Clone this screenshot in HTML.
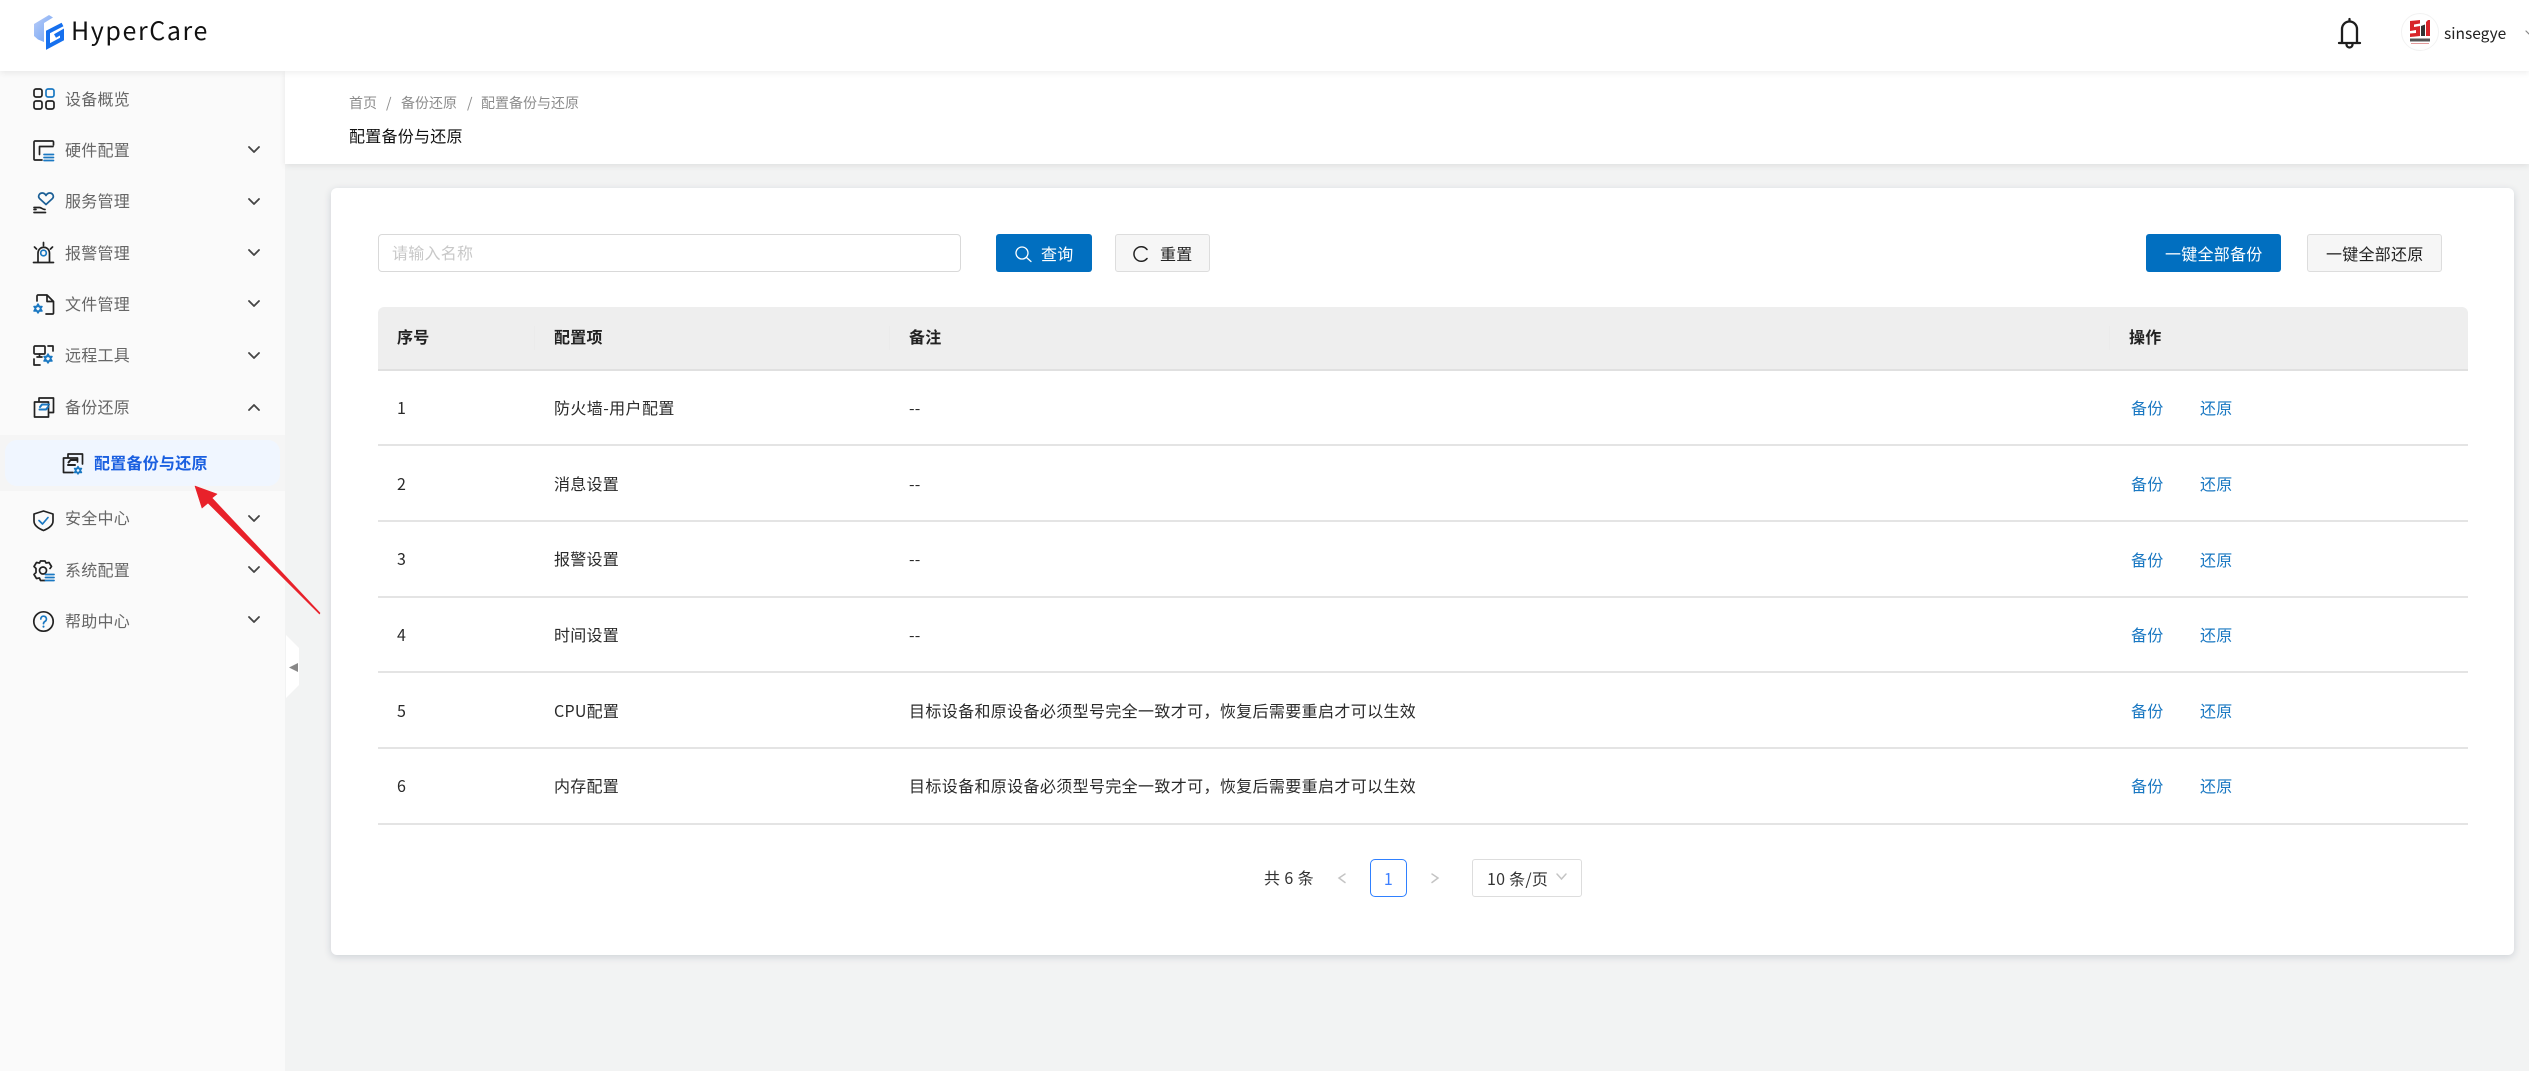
<!DOCTYPE html>
<html lang="zh"><head><meta charset="utf-8"><title>HyperCare</title>
<style>
*{box-sizing:border-box;margin:0;padding:0}
html,body{width:2529px;height:1071px;overflow:hidden;background:#f2f3f3}
body{position:relative;font-family:"Liberation Sans","Noto Sans CJK SC",sans-serif;font-size:16px;color:#333}
.a{position:absolute}
.t{position:absolute;white-space:nowrap;line-height:24px;height:24px;letter-spacing:.25px;font-family:"Noto Sans CJK SC","Liberation Sans",sans-serif}
.n{letter-spacing:0}
.m{color:#666;left:65px;margin-top:-2px}
.b{font-weight:700;color:#222;margin-top:-2px}
.l{color:#1a78c2;margin-top:-2px}
.c{color:#2a2a2a;margin-top:-2px}
.r{position:absolute;left:378px;width:2090px;height:2px;background:#e4e4e4}
</style></head><body>
<div class="a" style="left:0;top:71px;width:285px;height:1000px;background:#fafafa"></div>
<div class="a" style="left:285px;top:71px;width:2244px;height:93px;background:#fff;box-shadow:0 2px 6px rgba(0,0,0,.08)"></div>
<div class="a" style="left:0;top:0;width:2529px;height:71px;background:#fff;box-shadow:0 2px 6px rgba(0,0,0,.07)"></div>
<div class="a" style="left:0;top:435px;width:285px;height:56px;background:#f5f5f5"></div>
<div class="a" style="left:5px;top:440px;width:275px;height:46px;background:#f0f6ff;border-radius:12px"></div>
<div class="a" style="left:331px;top:188px;width:2183px;height:767px;background:#fff;border-radius:6px;box-shadow:0 2px 8px rgba(20,40,70,.16)"></div>

<div class="t" style="left:71px;top:12px;height:36px;line-height:36px;font-size:25px;letter-spacing:1.6px;color:#111">HyperCare</div>
<div class="t n" style="left:2444px;top:21px;color:#222;font-size:15.5px">sinsegye</div>

<div class="t m" style="top:88px">设备概览</div>
<div class="t m" style="top:139px">硬件配置</div>
<div class="t m" style="top:190px">服务管理</div>
<div class="t m" style="top:242px">报警管理</div>
<div class="t m" style="top:293px">文件管理</div>
<div class="t m" style="top:344px">远程工具</div>
<div class="t m" style="top:396px">备份还原</div>
<div class="t" style="left:94px;top:450px;font-weight:700;color:#1a5fe0">配置备份与还原</div>
<div class="t m" style="top:507px">安全中心</div>
<div class="t m" style="top:559px">系统配置</div>
<div class="t m" style="top:610px">帮助中心</div>

<div class="t n" style="left:349px;top:91px;font-size:14px;color:#8c8c8c">首页</div>
<div class="t n" style="left:386px;top:91px;font-size:14px;color:#8c8c8c">/</div>
<div class="t n" style="left:401px;top:91px;font-size:14px;color:#8c8c8c">备份还原</div>
<div class="t n" style="left:467px;top:91px;font-size:14px;color:#8c8c8c">/</div>
<div class="t n" style="left:481px;top:91px;font-size:14px;color:#8c8c8c">配置备份与还原</div>
<div class="t" style="left:349px;top:123px;color:#111">配置备份与还原</div>

<div class="a" style="left:378px;top:234px;width:583px;height:38px;border:1px solid #d9d9d9;border-radius:4px;background:#fff"></div>
<div class="t" style="left:392px;top:240px;color:#c8c8c8">请输入名称</div>
<div class="a" style="left:996px;top:234px;width:96px;height:38px;background:#016fc0;border-radius:3px"></div>
<div class="t" style="left:1041px;top:241px;color:#fff">查询</div>
<div class="a" style="left:1115px;top:234px;width:95px;height:38px;background:#f6f6f6;border:1px solid #ddd;border-radius:3px"></div>
<div class="t" style="left:1160px;top:241px;color:#222">重置</div>
<div class="a" style="left:2146px;top:234px;width:135px;height:38px;background:#016fc0;border-radius:3px"></div>
<div class="t" style="left:2165px;top:241px;color:#fff">一键全部备份</div>
<div class="a" style="left:2307px;top:234px;width:135px;height:38px;background:#f6f6f6;border:1px solid #ddd;border-radius:3px"></div>
<div class="t" style="left:2326px;top:241px;color:#222">一键全部还原</div>

<div class="a" style="left:378px;top:307px;width:2090px;height:64px;background:#eee;border-radius:6px 6px 0 0;border-bottom:2px solid #e0e0e0"></div>
<div class="a" style="left:534px;top:326px;width:1px;height:24px;background:#ebebeb"></div>
<div class="a" style="left:889px;top:326px;width:1px;height:24px;background:#ebebeb"></div>
<div class="a" style="left:2109px;top:326px;width:1px;height:24px;background:#ebebeb"></div>
<div class="t b" style="left:397px;top:326px">序号</div>
<div class="t b" style="left:554px;top:326px">配置项</div>
<div class="t b" style="left:909px;top:326px">备注</div>
<div class="t b" style="left:2129px;top:326px">操作</div>

<div class="r" style="top:444px"></div><div class="r" style="top:520px"></div><div class="r" style="top:596px"></div><div class="r" style="top:671px"></div><div class="r" style="top:747px"></div><div class="r" style="top:823px"></div>

<div class="t c" style="left:397px;top:397px">1</div><div class="t c" style="left:554px;top:397px;letter-spacing:.4px">防火墙-用户配置</div><div class="t c" style="left:909px;top:397px">--</div><div class="t l" style="left:2131px;top:397px">备份</div><div class="t l" style="left:2200px;top:397px">还原</div>
<div class="t c" style="left:397px;top:473px">2</div><div class="t c" style="left:554px;top:473px">消息设置</div><div class="t c" style="left:909px;top:473px">--</div><div class="t l" style="left:2131px;top:473px">备份</div><div class="t l" style="left:2200px;top:473px">还原</div>
<div class="t c" style="left:397px;top:548px">3</div><div class="t c" style="left:554px;top:548px">报警设置</div><div class="t c" style="left:909px;top:548px">--</div><div class="t l" style="left:2131px;top:549px">备份</div><div class="t l" style="left:2200px;top:549px">还原</div>
<div class="t c" style="left:397px;top:624px">4</div><div class="t c" style="left:554px;top:624px">时间设置</div><div class="t c" style="left:909px;top:624px">--</div><div class="t l" style="left:2131px;top:624px">备份</div><div class="t l" style="left:2200px;top:624px">还原</div>
<div class="t c" style="left:397px;top:700px">5</div><div class="t c" style="left:554px;top:700px">CPU配置</div><div class="t c" style="left:909px;top:700px;letter-spacing:.36px">目标设备和原设备必须型号完全一致才可，恢复后需要重启才可以生效</div><div class="t l" style="left:2131px;top:700px">备份</div><div class="t l" style="left:2200px;top:700px">还原</div>
<div class="t c" style="left:397px;top:775px">6</div><div class="t c" style="left:554px;top:775px">内存配置</div><div class="t c" style="left:909px;top:775px;letter-spacing:.36px">目标设备和原设备必须型号完全一致才可，恢复后需要重启才可以生效</div><div class="t l" style="left:2131px;top:775px">备份</div><div class="t l" style="left:2200px;top:775px">还原</div>

<div class="t" style="left:1264px;top:865px;color:#333;letter-spacing:.4px">共 6 条</div>
<div class="a" style="left:1370px;top:859px;width:37px;height:38px;border:1px solid #2f80ff;border-radius:5px"></div>
<div class="t" style="left:1370px;top:866px;width:37px;text-align:center;color:#3d7fff">1</div>
<div class="a" style="left:1472px;top:859px;width:110px;height:38px;border:1px solid #ddd;border-radius:3px"></div>
<div class="t" style="left:1487px;top:866px;color:#333">10 条/页</div>

<svg class="a" style="left:0;top:0" width="2529" height="1071" viewBox="0 0 2529 1071" fill="none" stroke-linecap="round" stroke-linejoin="round">
<defs><linearGradient id="lg" x1="0" y1="0" x2="1" y2="1"><stop offset="0" stop-color="#b9ccf8"/><stop offset="1" stop-color="#6fa3f3"/></linearGradient></defs>
<!-- logo -->
<path d="M34 24 49 15 53 17.500 44 23V42L38 39.500 34 36Z" fill="url(#lg)"/>
<path d="M62.500 24.500 48 32V46.500L62 39V32L55 36" stroke="#1670ee" stroke-width="4" stroke-linecap="butt" stroke-linejoin="miter"/>
<!-- menu icons -->
<g stroke="#222" stroke-width="1.700">
<g transform="translate(33,88)"><rect x="1" y="1" width="8" height="8" rx="2"/><rect x="13" y="1" width="8" height="8" rx="2" stroke="#1a78c2"/><rect x="1" y="13" width="8" height="8" rx="2"/><rect x="13" y="13" width="8" height="8" rx="2"/></g>
<g transform="translate(33,140)"><path d="M20.500 5V2a1 1 0 0 0-1-1H2a1 1 0 0 0-1 1V19a1 1 0 0 0 1 1H9"/><path d="M6.500 14.500V6.500H20"/><path d="M11 14.500H20.500M11 17.500H20.500M11 20.500H20.500" stroke="#1a78c2"/></g>
<g transform="translate(33,192)"><path d="M13 12.500 6.500 6.500C4.500 4 6.500 .8 9.500 1 11.500 1.200 12.500 2.500 13 3.500 13.500 2.500 14.500 1.200 16.500 1 19.500 .8 21.500 4 19.500 6.500Z" stroke="#1b5f96"/><path d="M1 20.500H12.500M1 15.500H6.500C8.500 15.500 9.500 17.500 12 17.500M1 17.500H3"/></g>
<g transform="translate(33,242)"><path d="M5 20V11a5.700 5.700 0 0 1 11.500 0V20M0.500 20.500H20.500M10.500 0.500V3.500M1.500 5 3.500 7M19.500 5 17.500 7"/><circle cx="10.500" cy="11" r="2.800" stroke="#1a78c2"/></g>
<g transform="translate(33,294)"><path d="M4 7V2a1 1 0 0 1 1-1H14L20.500 7.500V19a1 1 0 0 1-1 1H13M14 1.500V7.500H20"/><path d="M5 10 9 17H1ZM5 19 1 12.500H9Z" stroke="#1a78c2" stroke-width="1.500"/></g>
<g transform="translate(33,345)"><rect x="1" y="1" width="11" height="8" rx="1"/><path d="M4 12H9M6.500 9V12M15 1H20V6M1 14V20H7"/><path d="M15 9 19 16H11ZM15 18 11 11.500H19Z" stroke="#1a78c2" stroke-width="1.500"/></g>
<g transform="translate(33,397)"><path d="M6 5H1.500V20H15.500V15.500H20.500V1H6V5H15.500V15.500"/><path d="M16 7.500H9L7 10M6.500 12.500H13L15 10" stroke="#1a78c2" stroke-width="2"/></g>
<g transform="translate(62,453)"><path d="M6 5H1.500V19.500H11M6 5V1H20.500V11M6 5H15.500V9"/><path d="M15 7H8.500L6.500 9.500M6 12H13" stroke-width="2"/><path d="M16 13.500 19.500 19.500H12.500ZM16 21 12.500 15.500H19.500Z" stroke="#1a78c2" stroke-width="1.400"/></g>
<g transform="translate(33,510)"><path d="M10.500 1 20 4V11C20 15.500 15.500 18.500 10.500 20.500 5.500 18.500 1 15.500 1 11V4Z"/><path d="M6 10.500 9.500 14 15 7.500" stroke="#1a78c2"/></g>
<g transform="translate(33,560)"><path d="M12 20.500H7.500L6.500 18 3.500 18.500 1 14.500 3 12.500V8.500L1 6.500 3.500 2.500 6.500 3 7.500 1H12L13 3 16 2.500 18.500 6.500 17 8.500"/><circle cx="10" cy="10.500" r="3.500"/><path d="M12.500 14.500H21M12.500 17.500H21M12.500 20.500H21" stroke="#1a78c2" stroke-width="1.800"/></g>
<g transform="translate(33,611)"><circle cx="10.500" cy="10.500" r="9.700"/><path d="M7.800 8A2.800 2.800 0 1 1 12 10.400C11 11 10.500 11.600 10.500 12.700" stroke="#1a78c2"/><path d="M10.500 15.500V15.800" stroke="#1a78c2" stroke-width="2"/></g>
</g>
<!-- chevrons -->
<g stroke="#444" stroke-width="1.800">
<path d="M249 147 254 152 259 147M249 199 254 204 259 199M249 250 254 255 259 250M249 301 254 306 259 301M249 353 254 358 259 353M249 410 254 405 259 410M249 516 254 521 259 516M249 567 254 572 259 567M249 617 254 622 259 617"/>
</g>
<!-- handle -->
<path d="M286 635 299 648V685L286 698Z" fill="#fff"/>
<path d="M289 667.500 298 663V672Z" fill="#888"/>
<!-- arrow -->
<path d="M195 486 217 494 212 498 320 613 319.500 614 208 503 202 508Z" fill="#e8212a" stroke="#e8212a" stroke-width=".6"/>
<!-- search, reset -->
<circle cx="1022" cy="253" r="6" stroke="#fff" stroke-width="1.300"/><path d="M1026.500 257.500 1031 261.500" stroke="#fff" stroke-width="1.300"/>
<path d="M1147 249.500A7.300 7.300 0 1 0 1147 258.500" stroke="#222" stroke-width="1.500" fill="none"/>
<!-- bell -->
<path d="M2339 43H2360M2342 43V29a7.500 7.500 0 0 1 15 0V43M2349.500 21.500V19M2346.500 44.500a3 3 0 0 0 6 0" stroke="#1d1d1d" stroke-width="2.300"/>
<!-- avatar -->
<circle cx="2420" cy="32" r="18.500" fill="#fff" stroke="#f2f2f2"/>
<path d="M2410 21 2420 20V23.500L2414 24.500V27L2420 26V36L2410 37V33.500L2416 33V30L2410 31ZM2428 20 2430 20V36H2426V22Z" fill="#d8242a"/>
<path d="M2421 26 2425 24.500V36H2421Z" fill="#333"/>
<rect x="2410" y="38.500" width="20" height="3" fill="#555"/>
<rect x="2411" y="43" width="18" height="1" fill="#e39a9a"/>
<path d="M2526 31 2529 34" stroke="#888" stroke-width="1.200"/>
<!-- pager chevrons -->
<path d="M1345 874 1339 878 1345 882.500" stroke="#c4c4c4" stroke-width="1.500" stroke-linejoin="miter"/>
<path d="M1432 874 1438 878 1432 882.500" stroke="#c4c4c4" stroke-width="1.500" stroke-linejoin="miter"/>
<path d="M1557 874 1561.500 879 1566 874" stroke="#c4c4c4" stroke-width="1.500" stroke-linejoin="miter"/>
</svg>
</body></html>
